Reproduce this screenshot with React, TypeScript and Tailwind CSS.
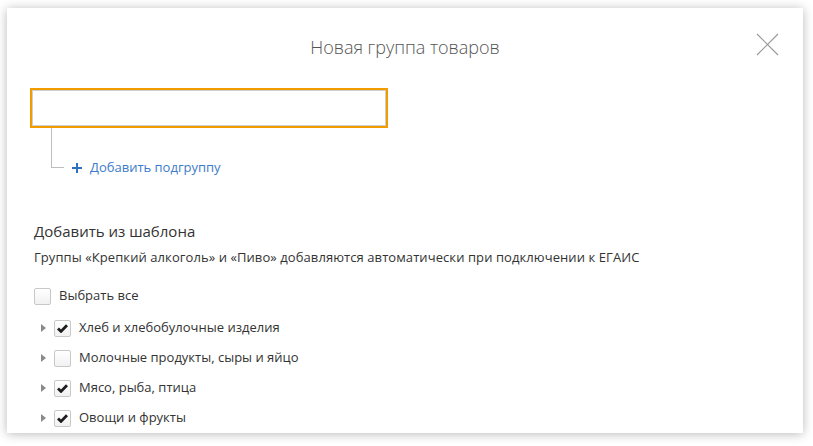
import React from "react";

const Check = () => (
  <svg width="11" height="9" viewBox="0 0 11 9" className="block">
    <path d="M1 4.4 L4 7.4 L10 1.2" fill="none" stroke="#1e1e1e" strokeWidth="2.8" />
  </svg>
);

const Box = ({ checked }: { checked?: boolean }) => (
  <div className="w-[17px] h-[17px] shrink-0 rounded-[2px] border border-[#c8c8c8] bg-gradient-to-b from-white to-[#f1f1f1] flex items-center justify-center">
    {checked && <Check />}
  </div>
);

const rows = [
  { label: "Хлеб и хлебобулочные изделия", checked: true },
  { label: "Молочные продукты, сыры и яйцо", checked: false },
  { label: "Мясо, рыба, птица", checked: true },
  { label: "Овощи и фрукты", checked: true },
];

export default function App() {
  return (
    <div className="w-[813px] h-[446px] bg-white overflow-hidden pt-[8px] pl-[7px] font-['Open_Sans',sans-serif]">
      <div className="relative w-[796px] h-[425px] bg-white shadow-[0_1px_10px_rgba(0,0,0,0.28)] overflow-hidden">
        <div className="h-[80px] flex items-center justify-center pb-[2px]">
          <h1 className="text-[18px] font-light text-[#555] leading-[24px]">Новая группа товаров</h1>
        </div>
        <button className="absolute left-[749px] top-[25px] w-[23px] h-[23px]">
          <svg width="23" height="23" viewBox="0 0 23 23">
            <path d="M1 1 L22 22 M22 1 L1 22" stroke="#9a9a9a" strokeWidth="1.2" />
          </svg>
        </button>

        <div className="ml-[23px] w-[358px] h-[40px] border-2 border-[#f39c00]">
          <div className="w-full h-full border border-[#cfcfcf]" />
        </div>

        <div className="ml-[44px] flex items-start">
          <div className="w-[13px] h-[40px] border-l border-b border-[#bdbdbd]" />
          <div className="mt-[30px] h-[20px] ml-[8px] flex items-center gap-[8px] text-[13px] text-[#3d7cc9]">
            <svg width="10" height="10" viewBox="0 0 10 10">
              <path d="M5 0 V10 M0 5 H10" stroke="#2f6fc0" strokeWidth="2" />
            </svg>
            <span>Добавить подгруппу</span>
          </div>
        </div>

        <div className="ml-[27px] mt-[43px] text-[15px] leading-[20px] text-[#333]">Добавить из шаблона</div>
        <div className="ml-[27px] mt-[6px] text-[13px] leading-[20px] text-[#333] tracking-[0.08px]">
          Группы «Крепкий алкоголь» и «Пиво» добавляются автоматически при подключении к ЕГАИС
        </div>

        <div className="ml-[27px] mt-[14px] h-[30px] flex items-center gap-[8px] text-[13px] text-[#333]">
          <Box />
          <span>Выбрать все</span>
        </div>

        <div className="mt-[2px] flex flex-col">
          {rows.map((r) => (
            <div key={r.label} className="ml-[34px] h-[30px] flex items-center text-[13px] text-[#333]">
              <svg width="5" height="8" viewBox="0 0 5 8" className="mr-[8px]">
                <path d="M0 0 L5 4 L0 8 Z" fill="#8a8a8a" />
              </svg>
              <Box checked={r.checked} />
              <span className="ml-[8px]">{r.label}</span>
            </div>
          ))}
        </div>
      </div>
    </div>
  );
}
